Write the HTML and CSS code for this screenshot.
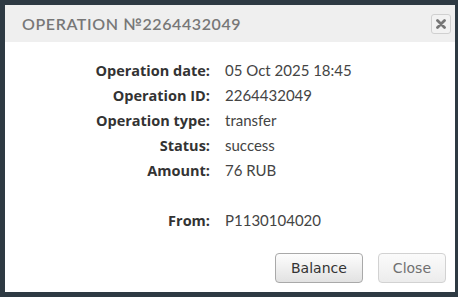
FILE: index.html
```html
<!DOCTYPE html>
<html lang="en">
<head>
    <meta charset="UTF-8">
    <title>Operation</title>
    <link rel="stylesheet" href="styles.css">
</head>
<body>
    <div class="modal">
        <div class="modal-header">
            <span class="modal-title">Operation №2264432049</span>
            <button class="close-x" type="button">
                <svg width="10" height="10" viewBox="0 0 10 10">
                    <path d="M1.5 1.5 L8.5 8.5 M8.5 1.5 L1.5 8.5" stroke="#777" stroke-width="2.8" stroke-linecap="round"/>
                </svg>
            </button>
        </div>
        <div class="modal-body">
            <div class="label">Operation date:</div><div class="value">05 Oct 2025 18:45</div>
            <div class="label">Operation ID:</div><div class="value">2264432049</div>
            <div class="label">Operation type:</div><div class="value">transfer</div>
            <div class="label">Status:</div><div class="value">success</div>
            <div class="label">Amount:</div><div class="value">76 RUB</div>
            <div class="label"></div><div class="value"></div>
            <div class="label">From:</div><div class="value">P1130104020</div>
        </div>
        <div class="modal-footer">
            <button class="btn" type="button">Balance</button>
            <button class="btn btn-light" type="button">Close</button>
        </div>
    </div>
</body>
</html>
```

FILE: styles.css
```css
body {
    margin: 0;
    background: #2e3a43;
    font-family: 'Lato', Arial, sans-serif;
}

.modal {
    margin: 5px;
    width: 450px;
    height: 287px;
    background: #fff;
    display: flex;
    flex-direction: column;
    box-sizing: border-box;
}

.modal-header {
    height: 37px;
    background: #efefef;
    display: flex;
    align-items: center;
    justify-content: space-between;
    padding: 0 4px 0 17px;
    box-sizing: border-box;
}

.modal-title {
    text-transform: uppercase;
    font-size: 16px;
    letter-spacing: 0.6px;
    color: #777;
    font-weight: 600;
}

.close-x {
    width: 20px;
    height: 20px;
    padding: 0;
    border: 1px solid #d0d0d0;
    border-radius: 3px;
    background: #f2f2f2;
    display: flex;
    align-items: center;
    justify-content: center;
}

.modal-body {
    flex: 1;
    display: grid;
    grid-template-columns: 205px 1fr;
    grid-auto-rows: 25px;
    column-gap: 15px;
    padding-top: 16px;
    font-size: 15px;
    color: #444;
}

.label {
    text-align: right;
    font-family: 'Open Sans', Arial, sans-serif;
    font-weight: bold;
    font-size: 14.5px;
    color: #333;
    line-height: 25px;
}

.value {
    line-height: 25px;
}

.modal-footer {
    display: flex;
    justify-content: flex-end;
    gap: 15px;
    padding: 0 9px 9px 0;
}

.btn {
    height: 30px;
    padding: 0 15px;
    font-family: 'DejaVu Sans', Verdana, sans-serif;
    font-size: 14px;
    color: #333;
    border: 1px solid #a9a9a9;
    border-radius: 4px;
    background: linear-gradient(#fdfdfd, #e2e2e2);
}

.btn-light {
    padding: 0 14px;
    color: #707070;
    border-color: #d2d2d2;
    background: linear-gradient(#fbfbfb, #ececec);
}
```
